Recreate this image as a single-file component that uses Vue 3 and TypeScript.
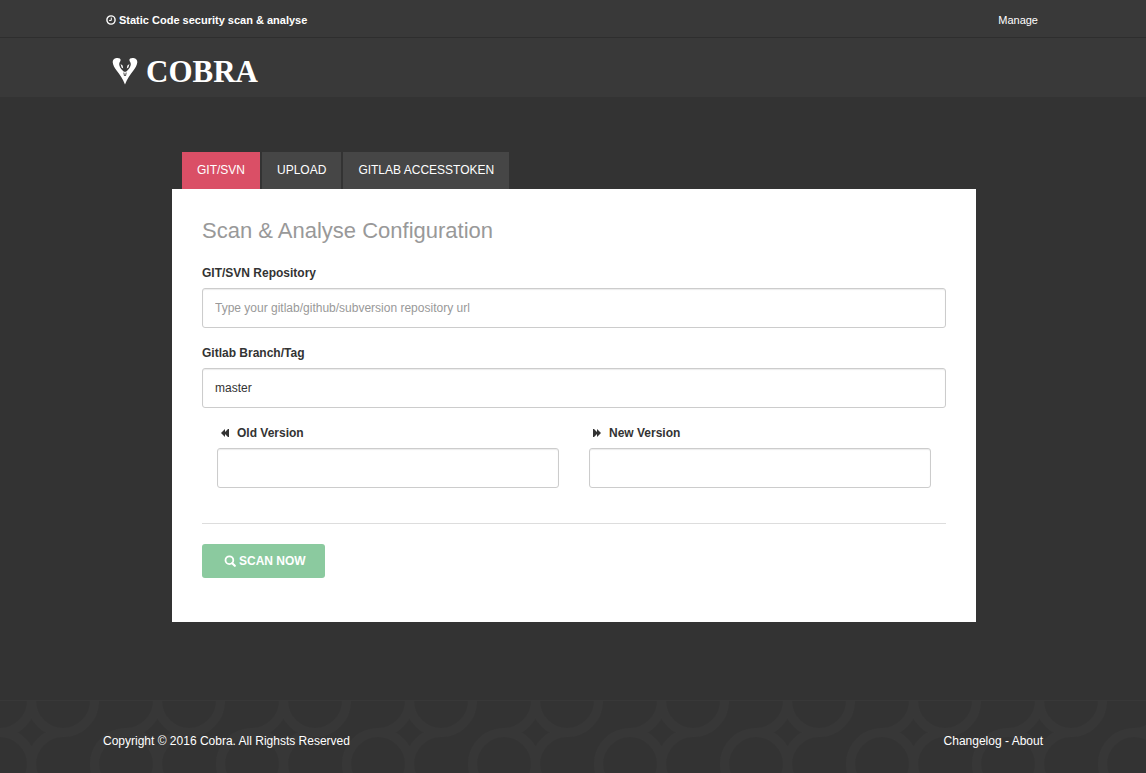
<script setup lang="ts">
import { ref } from 'vue'

const tabs: string[] = ['GIT/SVN', 'UPLOAD', 'GITLAB ACCESSTOKEN']
const activeTab = ref(0)
const repository = ref('')
const branch = ref('master')
const oldVersion = ref('')
const newVersion = ref('')
</script>

<template>
  <div class="page">
    <header>
      <div class="topbar">
        <div class="container bar-row">
          <strong class="tagline">
            <svg class="clock" viewBox="0 0 10 10" aria-hidden="true">
              <circle cx="5" cy="5" r="4.1" fill="none" stroke="currentColor" stroke-width="1.4" />
              <path d="M5.3 2.6V5.4H3.1" fill="none" stroke="currentColor" stroke-width="1" />
            </svg>
            Static Code security scan &amp; analyse
          </strong>
          <a class="manage" href="#">Manage</a>
        </div>
      </div>
      <div class="brandbar">
        <div class="container">
          <a class="brand" href="#">
            <svg class="emblem" viewBox="0 0 26 28" aria-hidden="true">
              <path
                fill="#fff"
                d="M4.6 1C7 .8 8.8 1.4 8.6 3.2C8.4 4.6 7.2 5.4 7.2 7.2C7.3 9.4 8.6 11.4 10.6 13.4L12 14.8H14L15.4 13.4C17.4 11.4 18.7 9.4 18.8 7.2C18.8 5.4 17.6 4.6 17.4 3.2C17.2 1.4 19 .8 21.4 1C24.2 1.3 25.4 3 25.3 5.2C25.1 8 23.4 10.8 21.4 13.6C18 18.2 15.2 21.6 13 27.6C10.8 21.6 8 18.2 4.6 13.6C2.6 10.8 .9 8 .7 5.2C.6 3 1.8 1.3 4.6 1Z"
              />
              <path d="M8.6 7L10.6 8.4L11.2 11.6L9.6 10.4ZM17.4 7L15.4 8.4L14.8 11.6L16.4 10.4Z" fill="#fff" />
              <path d="M11.8 15.6L12.5 19M14.2 15.6L13.5 19" fill="none" stroke="#393939" stroke-width=".9" />
            </svg>
            <span>COBRA</span>
          </a>
        </div>
      </div>
    </header>

    <main class="container">
      <div class="scan">
        <nav class="tabs">
          <button
            v-for="(tab, index) in tabs"
            :key="tab"
            type="button"
            class="tab"
            :class="{ active: index === activeTab }"
            @click="activeTab = index"
          >
            {{ tab }}
          </button>
        </nav>
        <form class="card" @submit.prevent>
          <h1>Scan &amp; Analyse Configuration</h1>
          <div class="field">
            <label for="repository">GIT/SVN Repository</label>
            <input
              id="repository"
              v-model="repository"
              type="text"
              placeholder="Type your gitlab/github/subversion repository url"
            />
          </div>
          <div class="field">
            <label for="branch">Gitlab Branch/Tag</label>
            <input id="branch" v-model="branch" type="text" />
          </div>
          <div class="versions">
            <div class="field">
              <label for="old-version" class="with-icon">
                <svg viewBox="0 0 8 8" aria-hidden="true">
                  <path d="M0 4L4 0V3L7 0H8V8H7L4 5V8Z" fill="currentColor" />
                </svg>
                Old Version
              </label>
              <input id="old-version" v-model="oldVersion" type="text" />
            </div>
            <div class="field">
              <label for="new-version" class="with-icon">
                <svg viewBox="0 0 8 8" aria-hidden="true">
                  <path d="M8 4L4 0V3L1 0H0V8H1L4 5V8Z" fill="currentColor" />
                </svg>
                New Version
              </label>
              <input id="new-version" v-model="newVersion" type="text" />
            </div>
          </div>
          <hr />
          <button class="submit" type="submit">
            <svg viewBox="0 0 12 12" aria-hidden="true">
              <circle cx="5.4" cy="5.2" r="3.9" fill="none" stroke="currentColor" stroke-width="1.8" />
              <path d="M8.2 8.2L10.8 10.8" stroke="currentColor" stroke-width="2.2" stroke-linecap="round" />
            </svg>
            SCAN NOW
          </button>
        </form>
      </div>
    </main>

    <footer>
      <svg class="pattern" aria-hidden="true">
        <defs>
          <pattern id="rings" width="126" height="126" patternUnits="userSpaceOnUse">
            <g fill="none" stroke="#373737" stroke-width="9">
              <path d="M31.5 0A31.5 31.5 0 0 1 0 31.5" />
              <path d="M31.5 0A31.5 31.5 0 0 0 94.5 0" />
              <path d="M0 31.5A31.5 31.5 0 0 1 0 94.5" />
              <path d="M63 31.5A31.5 31.5 0 0 0 63 94.5" />
              <path d="M126 31.5A31.5 31.5 0 0 0 126 94.5" />
            </g>
          </pattern>
        </defs>
        <rect width="100%" height="100%" fill="url(#rings)" />
      </svg>
      <div class="container footer-row">
        <span>Copyright © 2016 Cobra. All Righsts Reserved</span>
        <span><a href="#">Changelog</a> - <a href="#">About</a></span>
      </div>
    </footer>
  </div>
</template>

<style>
body {
  margin: 0;
  background: #333;
}
</style>

<style scoped>
.page,
.page * {
  box-sizing: border-box;
}
.page {
  min-height: 100vh;
  display: flex;
  flex-direction: column;
  background: #333;
  color: #fff;
  font: 12px/20px "Liberation Sans", Arial, sans-serif;
}
a {
  color: inherit;
  text-decoration: none;
}
button,
input {
  font: inherit;
}
button {
  border: 0;
  cursor: pointer;
}
.container {
  width: 100%;
  max-width: 970px;
  margin: 0 auto;
  padding: 0 15px;
}
.topbar {
  background: #393939;
  border-bottom: 1px solid #2e2e2e;
  font-size: 11px;
}
.bar-row {
  display: flex;
  justify-content: space-between;
  align-items: center;
  height: 37px;
  padding: 3px 20px 0 18px;
}
.tagline {
  display: flex;
  align-items: center;
  gap: 3px;
}
.clock {
  width: 10px;
  height: 10px;
}
.brandbar {
  background: #393939;
  height: 59px;
  padding-top: 19px;
}
.brand {
  display: inline-flex;
  gap: 8px;
  margin-left: 9px;
  font: bold 31px/30px "Liberation Serif", "Times New Roman", serif;
}
.emblem {
  width: 26px;
  height: 28px;
}
main {
  flex: 1;
}
.scan {
  margin: 55px 67px 78px 69px;
}
.tabs {
  display: flex;
  gap: 2px;
  padding-left: 10px;
}
.tab {
  height: 37px;
  padding: 0 15px 2px;
  background: #464646;
  color: #fff;
}
.tab.active {
  background: #da4f66;
}
.card {
  padding: 30px 30px 44px;
  background: #fff;
  color: #333;
}
h1 {
  margin: 0 0 20px;
  color: #999;
  font-size: 22px;
  font-weight: normal;
  line-height: 24px;
}
.field {
  margin-bottom: 15px;
}
label {
  display: block;
  margin-bottom: 5px;
  font-weight: bold;
}
.with-icon {
  display: flex;
  align-items: center;
  gap: 8px;
  padding-left: 4px;
}
.with-icon svg {
  width: 8px;
  height: 8px;
}
input {
  display: block;
  width: 100%;
  height: 40px;
  padding: 0 12px;
  border: 1px solid #ccc;
  border-radius: 3px;
  background: #fff;
  box-shadow: inset 0 1px 1px rgba(0, 0, 0, 0.08);
  color: #333;
}
input::placeholder {
  color: #999;
  opacity: 1;
}
.versions {
  display: grid;
  grid-template-columns: 1fr 1fr;
  gap: 30px;
  padding: 0 15px;
}
hr {
  margin: 20px 0;
  border: 0;
  border-top: 1px solid #ddd;
}
.submit {
  display: flex;
  align-items: center;
  gap: 3px;
  height: 34px;
  padding: 0 19px 0 22px;
  border-radius: 3px;
  background: #8bca9f;
  color: #fff;
  font-weight: bold;
}
.submit svg {
  width: 12px;
  height: 12px;
}
footer {
  position: relative;
  border-top: 1px solid #383838;
}
.pattern {
  position: absolute;
  inset: 0;
  width: 100%;
  height: 100%;
}
.footer-row {
  position: relative;
  display: flex;
  justify-content: space-between;
  padding-top: 30px;
  padding-bottom: 22px;
}
</style>
